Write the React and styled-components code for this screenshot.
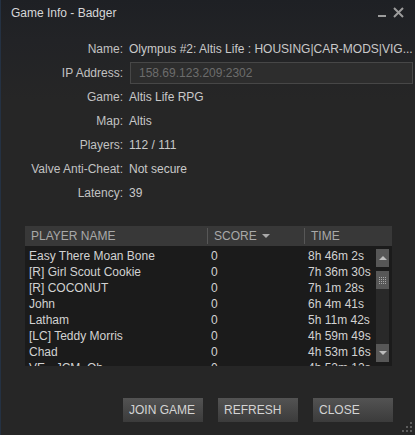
import React from 'react';
import styled, { createGlobalStyle } from 'styled-components';

const info = [
    { label: 'Name:', value: 'Olympus #2: Altis Life : HOUSING|CAR-MODS|VIG...' },
    { label: 'IP Address:', value: '158.69.123.209:2302', input: true },
    { label: 'Game:', value: 'Altis Life RPG' },
    { label: 'Map:', value: 'Altis' },
    { label: 'Players:', value: '112 / 111' },
    { label: 'Valve Anti-Cheat:', value: 'Not secure' },
    { label: 'Latency:', value: '39' },
];

const players = [
    ['Easy There Moan Bone', '0', '8h 46m 2s'],
    ['[R] Girl Scout Cookie', '0', '7h 36m 30s'],
    ['[R] COCONUT', '0', '7h 1m 28s'],
    ['John', '0', '6h 4m 41s'],
    ['Latham', '0', '5h 11m 42s'],
    ['[LC] Teddy Morris', '0', '4h 59m 49s'],
    ['Chad', '0', '4h 53m 16s'],
    ['VE - JCM. Oh', '0', '4h 52m 12s'],
];

export default function App() {
    return (
        <>
            <GlobalStyle />
            <Window>
                <TitleBar>
                    <Title>Game Info - Badger</Title>
                    <Controls>
                        <Minimize />
                        <svg width="11" height="11" viewBox="0 0 11 11">
                            <path d="M1 1 L10 10 M10 1 L1 10" stroke="#9c9c9c" strokeWidth="2" />
                        </svg>
                    </Controls>
                </TitleBar>

                <InfoGrid>
                    {info.map((row) => (
                        <React.Fragment key={row.label}>
                            <Label>{row.label}</Label>
                            {row.input ? (
                                <Field>{row.value}</Field>
                            ) : (
                                <Value>{row.value}</Value>
                            )}
                        </React.Fragment>
                    ))}
                </InfoGrid>

                <Table>
                    <Header>
                        <HeadCell>PLAYER NAME</HeadCell>
                        <HeadCell divider>
                            SCORE
                            <Caret />
                        </HeadCell>
                        <HeadCell divider>TIME</HeadCell>
                    </Header>
                    <Body>
                        <Rows>
                            {players.map((p, i) => (
                                <Row key={i}>
                                    <Cell>{p[0]}</Cell>
                                    <Cell>{p[1]}</Cell>
                                    <Cell>{p[2]}</Cell>
                                </Row>
                            ))}
                        </Rows>
                        <Scrollbar>
                            <ScrollBtn>
                                <Arrow up />
                            </ScrollBtn>
                            <Track>
                                <Thumb>
                                    <svg width="7" height="7" viewBox="0 0 7 7">
                                        {[0, 2, 4, 6].map((y) =>
                                            [0, 2, 4, 6].map((x) => (
                                                <rect key={x + '-' + y} x={x} y={y} width="1" height="1" fill="#a8a8a8" />
                                            ))
                                        )}
                                    </svg>
                                </Thumb>
                            </Track>
                            <ScrollBtn>
                                <Arrow />
                            </ScrollBtn>
                        </Scrollbar>
                    </Body>
                </Table>

                <Footer>
                    <Button>JOIN GAME</Button>
                    <Button>REFRESH</Button>
                    <Button>CLOSE</Button>
                </Footer>

                <Grip width="11" height="11" viewBox="0 0 11 11">
                    {[[8, 0], [4, 4], [8, 4], [0, 8], [4, 8], [8, 8]].map(([x, y]) => (
                        <rect key={x + '-' + y} x={x} y={y} width="2" height="2" fill="#5c5c5c" />
                    ))}
                </Grip>
            </Window>
        </>
    );
}

const GlobalStyle = createGlobalStyle`
    html, body {
        margin: 0;
        padding: 0;
        background: #262626;
    }
    body {
        font-family: Arial, "Liberation Sans", sans-serif;
        font-size: 12px;
    }
`;

const Window = styled.div`
    position: relative;
    width: 415px;
    height: 435px;
    box-sizing: border-box;
    border-left: 1px solid #243142;
    background: linear-gradient(to bottom, #1e2024 0px, #222326 40px, #262626 100px, #262626 100%);
    display: flex;
    flex-direction: column;
    overflow: hidden;
`;

const TitleBar = styled.div`
    height: 37px;
    display: flex;
    justify-content: space-between;
    align-items: flex-start;
    padding: 6px 11px 0 10px;
    box-sizing: border-box;
`;

const Title = styled.div`
    color: #d6d7d8;
    font-size: 12px;
    line-height: 15px;
`;

const Controls = styled.div`
    display: flex;
    align-items: flex-start;
    gap: 7px;
    padding-top: 1px;
`;

const Minimize = styled.div`
    width: 8px;
    height: 2px;
    margin-top: 8px;
    background: #9c9c9c;
`;

const InfoGrid = styled.div`
    display: grid;
    grid-template-columns: 122px 1fr;
    grid-auto-rows: 24px;
    column-gap: 6px;
    padding-right: 27px;
`;

const Label = styled.div`
    text-align: right;
    color: #c2c2c2;
    display: flex;
    align-items: center;
    justify-content: flex-end;
`;

const Value = styled.div`
    color: #c9c9c9;
    display: flex;
    align-items: center;
    white-space: nowrap;
`;

const Field = styled.div`
    align-self: center;
    height: 22px;
    box-sizing: border-box;
    margin-left: 1px;
    padding: 0 8px;
    display: flex;
    align-items: center;
    background: #2d2d2d;
    border: 1px solid #474747;
    color: #6c6c6c;
`;

const Table = styled.div`
    margin: 21px 23px 0 24px;
    display: flex;
    flex-direction: column;
`;

const Header = styled.div`
    height: 20px;
    background: #383838;
    display: grid;
    grid-template-columns: 182px 97px 1fr;
    align-items: center;
`;

const HeadCell = styled.div`
    height: 16px;
    display: flex;
    align-items: center;
    padding-left: 6px;
    color: #a9a9a9;
    border-left: ${({ divider }) => (divider ? '1px solid #575757' : 'none')};
`;

const Caret = styled.span`
    width: 0;
    height: 0;
    margin-left: 5px;
    border-left: 4px solid transparent;
    border-right: 4px solid transparent;
    border-top: 4px solid #a9a9a9;
`;

const Body = styled.div`
    height: 120px;
    background: #1b1b1b;
    display: flex;
    overflow: hidden;
`;

const Rows = styled.div`
    flex: 1;
    padding-top: 2px;
`;

const Row = styled.div`
    height: 16px;
    display: grid;
    grid-template-columns: 182px 97px 1fr;
    align-items: center;
    color: #d2d2d2;
`;

const Cell = styled.div`
    padding-left: 4px;
    white-space: nowrap;
`;

const Scrollbar = styled.div`
    width: 13px;
    margin: 3px 3px 4px 0;
    display: flex;
    flex-direction: column;
`;

const ScrollBtn = styled.div`
    height: 18px;
    background: #575757;
    display: flex;
    align-items: center;
    justify-content: center;
`;

const Arrow = styled.span`
    width: 0;
    height: 0;
    border-left: 4px solid transparent;
    border-right: 4px solid transparent;
    ${({ up }) => (up ? 'border-bottom: 4px solid #bdbdbd;' : 'border-top: 4px solid #bdbdbd;')}
`;

const Track = styled.div`
    flex: 1;
    margin-top: 4px;
    background: #292929;
`;

const Thumb = styled.div`
    height: 18px;
    background: #575757;
    display: flex;
    align-items: center;
    justify-content: center;
`;

const Footer = styled.div`
    display: flex;
    justify-content: flex-end;
    gap: 15px;
    margin-top: 32px;
    padding-right: 22px;
`;

const Button = styled.div`
    width: 80px;
    height: 24px;
    box-sizing: border-box;
    padding-left: 6px;
    display: flex;
    align-items: center;
    background: linear-gradient(to bottom, #535353, #3b3b3b);
    color: #d4d4d4;
    font-size: 12px;
`;

const Grip = styled.svg`
    position: absolute;
    right: 2px;
    bottom: 2px;
`;
